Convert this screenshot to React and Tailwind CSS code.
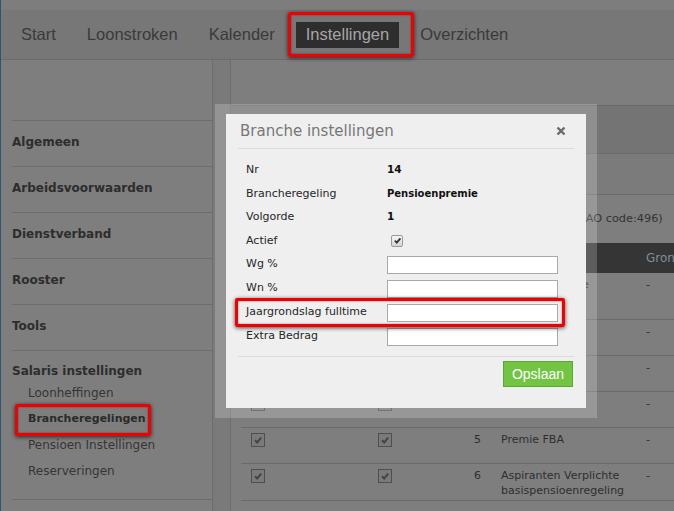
import { useState } from 'react'

const navItems = ['Start', 'Loonstroken', 'Kalender', 'Instellingen', 'Overzichten']

const menu = ['Algemeen', 'Arbeidsvoorwaarden', 'Dienstverband', 'Rooster', 'Tools']

const salarisItems = ['Loonheffingen', 'Brancheregelingen', 'Pensioen Instellingen', 'Reserveringen']

const regelingen = [
  { nr: 1, naam: 'Pensioenpremie', tall: true },
  { nr: 2, naam: 'Premie PAWW' },
  { nr: 3, naam: 'Sociaal Fonds' },
  { nr: 4, naam: 'Premie OOF' },
  { nr: 5, naam: 'Premie FBA' },
  { nr: 6, naam: 'Aspiranten Verplichte basispensioenregeling' },
]

function Check({ className }) {
  return (
    <svg viewBox="0 0 10 10" className={className}>
      <path d="M2 5.2 L4.2 7.4 L8.2 2.6" fill="none" stroke="currentColor" strokeWidth="2" />
    </svg>
  )
}

function TableCheckbox() {
  return (
    <span className="flex h-[14px] w-[14px] items-center justify-center border border-[#4f4f4f] bg-[#7a7a7a] text-[#444]">
      <Check className="h-[10px] w-[10px]" />
    </span>
  )
}

// red marker frame drawn on top of the page
function Marker({ className }) {
  return (
    <div
      className={`pointer-events-none absolute rounded-[2px] border-[3px] border-[#f20000] shadow-[0_1px_4px_rgba(0,0,0,0.7),inset_0_0_2px_rgba(0,0,0,0.5)] ${className}`}
    />
  )
}

function Row({ label, children, h }) {
  return (
    <div className={`flex items-center ${h}`}>
      <span className="w-[141px] shrink-0 text-[11px] text-[#262626]">{label}</span>
      {children}
    </div>
  )
}

function Field() {
  return <input type="text" readOnly className="h-[18px] w-[171px] border border-[#a9a9a9] bg-white" />
}

export default function App() {
  const [open] = useState(true)

  return (
    <div className="relative h-[511px] w-[674px] overflow-hidden border-l border-[#2d5572] bg-[#7e7e7e] font-['DejaVu_Sans',Verdana,sans-serif]">
      {/* top navigation */}
      <div className="h-[10px] bg-[#7d7d7d]" />
      <nav className="flex h-[50px] items-center border-b border-[#6b6b6b] bg-[#777777] pl-[10px] font-['Liberation_Sans',Arial,sans-serif] text-[16.5px]">
        {navItems.map((item) => (
          <span
            key={item}
            className={`mr-[11px] flex h-[26px] items-center px-[10px] ${
              item === 'Instellingen' ? 'bg-[#2e2e2e] text-[#a6a6a6]' : 'text-[#3a3a3a]'
            }`}
          >
            {item}
          </span>
        ))}
      </nav>

      <div className="flex h-[451px]">
        {/* settings menu */}
        <aside className="w-[212px] shrink-0 border-r border-[#6d6d6d] pl-[11px] pt-[60px] text-[#2d2d2d]">
          {menu.map((item) => (
            <div key={item} className="flex h-[46px] items-center border-t border-[#6e6e6e] pb-[4px] text-[12px] font-bold">
              {item}
            </div>
          ))}
          <div className="h-[150px] border-y border-[#6e6e6e] pt-[11px]">
            <div className="flex h-[18px] items-center text-[12px] font-bold">Salaris instellingen</div>
            {salarisItems.map((item) => (
              <div
                key={item}
                className={`flex h-[26px] items-center pl-[16px] ${
                  item === 'Brancheregelingen' ? 'text-[11px] font-bold text-[#2a2a2a]' : 'text-[12px] text-[#353535]'
                }`}
              >
                {item}
              </div>
            ))}
          </div>
        </aside>

        <div className="w-[18px] shrink-0 border-r border-[#6d6d6d] bg-[#7a7a7a]" />

        {/* content */}
        <main className="min-w-0 flex-1 overflow-hidden pt-[45px]">
          <div className="border-t border-[#6a6a6a]">
            <div className="h-[48px] border-b border-[#6c6c6c] bg-[#747474]" />
            <div className="h-[41px] border-b border-[#6c6c6c] bg-[#7b7b7b]" />
            <div className="flex h-[48px] items-center whitespace-nowrap pl-[10px] text-[11.3px] text-[#333]">
              Overzicht van de brancheregelingen voor deze werkgever (CAO code:496)
            </div>
            <div className="ml-[10px] border-b border-[#6a6a6a] text-[11px] text-[#2e2e2e]">
              <div className="flex h-[30px] items-center whitespace-nowrap bg-[#353535] text-[12px] text-[#7f8d99]">
                <span className="w-[127px] shrink-0 pl-[10px]">Actief</span>
                <span className="w-[80px] shrink-0 pl-[10px]">Tonen</span>
                <span className="w-[43px] shrink-0 pr-[10px] text-right">Nr</span>
                <span className="w-[146px] shrink-0 pl-[10px]">Omschrijving</span>
                <span className="pl-[9px]">Grondslag</span>
              </div>
              {regelingen.map((r, i) => (
                <div
                  key={r.nr}
                  className={`flex items-start pt-[4px] leading-[15px] ${r.tall ? 'h-[47px]' : 'h-[36px]'} ${
                    i < regelingen.length - 1 ? 'border-b border-[#6a6a6a]' : ''
                  }`}
                >
                  <span className="w-[127px] shrink-0 pl-[10px] pt-[1px]">
                    <TableCheckbox />
                  </span>
                  <span className="w-[80px] shrink-0 pl-[10px] pt-[1px]">
                    <TableCheckbox />
                  </span>
                  <span className="w-[43px] shrink-0 pr-[10px] text-right">{r.nr}</span>
                  <span className="w-[146px] shrink-0 pl-[10px]">{r.naam}</span>
                  <span className="pl-[9px]">-</span>
                </div>
              ))}
            </div>
          </div>
        </main>
      </div>

      {/* dialog */}
      {open && (
        <div className="absolute left-[214px] top-[104px] w-[382px] border-x-[11px] border-y-[10px] border-white/20">
          <div className="flex h-[294px] flex-col bg-[#efefef] px-[12px]">
            <div className="flex h-[35px] items-center justify-between border-b border-[#dcdcdc] pl-[2px] pr-[8px]">
              <span className="text-[15px] text-[#777]">Branche instellingen</span>
              <svg viewBox="0 0 10 10" className="h-[10px] w-[10px]">
                <path d="M1.5 1.5 L8.5 8.5 M8.5 1.5 L1.5 8.5" stroke="#6a6a6a" strokeWidth="2.4" />
              </svg>
            </div>

            <div className="pl-[8px] pt-[9.5px]">
              <Row label="Nr" h="h-[23.5px]">
                <span className="text-[10.5px] font-bold text-[#111]">14</span>
              </Row>
              <Row label="Brancheregeling" h="h-[23.5px]">
                <span className="text-[10px] font-bold text-[#111]">Pensioenpremie</span>
              </Row>
              <Row label="Volgorde" h="h-[23.5px]">
                <span className="text-[10.5px] font-bold text-[#111]">1</span>
              </Row>
              <Row label="Actief" h="h-[23.5px]">
                <span className="ml-[4px] flex h-[12px] w-[12px] items-center justify-center rounded-[2px] border border-[#9a9a9a] bg-gradient-to-b from-[#f6f6f6] to-[#d4d4d4] text-[#333]">
                  <Check className="h-[9px] w-[9px]" />
                </span>
              </Row>
              <Row label="Wg %" h="h-[24px]">
                <Field />
              </Row>
              <Row label="Wn %" h="h-[24px]">
                <Field />
              </Row>
              <Row label="Jaargrondslag fulltime" h="h-[24px]">
                <Field />
              </Row>
              <Row label="Extra Bedrag" h="h-[24px]">
                <Field />
              </Row>
            </div>

            <div className="mt-[7.5px] flex justify-end border-t border-[#dcdcdc] pr-[1px] pt-[4px]">
              <button className="h-[26px] w-[70px] border border-[#5da635] bg-[#72c443] font-['Liberation_Sans',Arial,sans-serif] text-[14px] text-white">
                Opslaan
              </button>
            </div>
          </div>
        </div>
      )}

      <Marker className="left-[287px] top-[12px] h-[45px] w-[126px]" />
      <Marker className="left-[14px] top-[404px] h-[32px] w-[136px]" />
      <Marker className="left-[234px] top-[298px] h-[29px] w-[330px]" />
    </div>
  )
}
